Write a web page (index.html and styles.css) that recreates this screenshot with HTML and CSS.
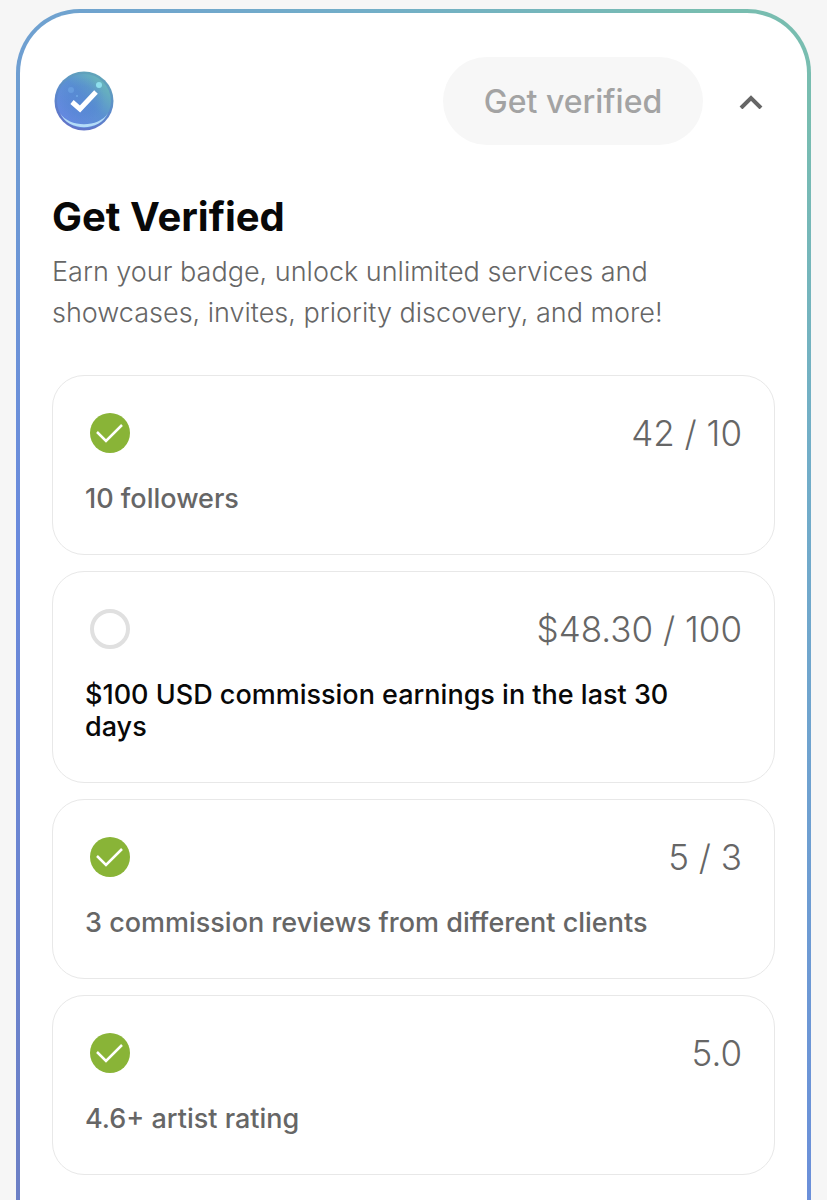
FILE: index.html
```html
<!DOCTYPE html>
<html lang="en">
<head>
    <meta charset="UTF-8">
    <meta name="viewport" content="width=device-width, initial-scale=1.0">
    <title>Get Verified</title>
    <link rel="stylesheet" href="styles.css">
</head>
<body>
    <main class="panel">
        <div class="panel-top">
            <svg class="badge" viewBox="0 0 60 60" aria-hidden="true">
                <defs>
                    <linearGradient id="rim" x1="0.3" y1="1" x2="0.7" y2="0">
                        <stop offset="0" stop-color="#6272c8"/>
                        <stop offset="0.5" stop-color="#5c8acc"/>
                        <stop offset="1" stop-color="#62a6b8"/>
                    </linearGradient>
                    <linearGradient id="disc" x1="0.2" y1="0.9" x2="0.9" y2="0.2">
                        <stop offset="0" stop-color="#6488e0"/>
                        <stop offset="0.55" stop-color="#5a90d2"/>
                        <stop offset="1" stop-color="#68b4bc"/>
                    </linearGradient>
                    <radialGradient id="core">
                        <stop offset="0.6" stop-color="#5080d2" stop-opacity="0.3"/>
                        <stop offset="1" stop-color="#5080d2" stop-opacity="0"/>
                    </radialGradient>
                </defs>
                <circle cx="30" cy="30" r="29.5" fill="url(#rim)"/>
                <circle cx="30" cy="30" r="27" fill="url(#disc)"/>
                <circle cx="28" cy="29" r="23" fill="url(#core)"/>
                <path d="M6 42C14 61 46 61 54 42C45 57 15 57 6 42Z" fill="#b4dcf8"/>
                <circle cx="17" cy="19" r="3" fill="#6fa8e6" opacity="0.6"/>
                <circle cx="23" cy="25" r="1" fill="#6fa8e6"/>
                <circle cx="45" cy="14" r="3" fill="#8fe0ee"/>
                <path d="M18 31L26 38L42 21" fill="none" stroke="#fff" stroke-width="5"/>
            </svg>
            <button class="verify" disabled>Get verified</button>
            <button class="toggle" aria-label="Collapse">
                <svg viewBox="0 0 24 16" aria-hidden="true">
                    <path d="M2 15L12 5L22 15" fill="none" stroke="#666" stroke-width="4"/>
                </svg>
            </button>
        </div>
        <h1>Get Verified</h1>
        <p class="intro">Earn your badge, unlock unlimited services and showcases, invites, priority discovery, and more!</p>
        <ul class="goals">
            <li class="goal">
                <div class="goal-row">
                    <svg class="mark" viewBox="0 0 40 40" aria-label="Done">
                        <circle cx="20" cy="20" r="20" fill="#89b437"/>
                        <path d="M7 19L16 28L32 12" fill="none" stroke="#fff" stroke-width="2.5"/>
                    </svg>
                    <span class="count">42 / 10</span>
                </div>
                <p class="label">10 followers</p>
            </li>
            <li class="goal open">
                <div class="goal-row">
                    <svg class="mark" viewBox="0 0 40 40" aria-label="Not done">
                        <circle cx="20" cy="20" r="18" fill="none" stroke="#e0e0e0" stroke-width="4"/>
                    </svg>
                    <span class="count">$48.30 / 100</span>
                </div>
                <p class="label">$100 USD commission earnings in the last 30 days</p>
            </li>
            <li class="goal">
                <div class="goal-row">
                    <svg class="mark" viewBox="0 0 40 40" aria-label="Done">
                        <circle cx="20" cy="20" r="20" fill="#89b437"/>
                        <path d="M7 19L16 28L32 12" fill="none" stroke="#fff" stroke-width="2.5"/>
                    </svg>
                    <span class="count">5 / 3</span>
                </div>
                <p class="label">3 commission reviews from different clients</p>
            </li>
            <li class="goal">
                <div class="goal-row">
                    <svg class="mark" viewBox="0 0 40 40" aria-label="Done">
                        <circle cx="20" cy="20" r="20" fill="#89b437"/>
                        <path d="M7 19L16 28L32 12" fill="none" stroke="#fff" stroke-width="2.5"/>
                    </svg>
                    <span class="count">5.0</span>
                </div>
                <p class="label">4.6+ artist rating</p>
            </li>
        </ul>
    </main>
</body>
</html>
```
FILE: styles.css
```css
* {
    box-sizing: border-box;
}
body {
    margin: 0;
    padding: 9px 16px 0;
    height: 100vh;
    overflow: hidden;
    background: #f6f6f6;
    font-family: Inter, "Open Sans", sans-serif;
    color: #666;
}
.panel {
    border: 4px solid transparent;
    border-radius: 64px;
    padding: 44px 32px 160px;
    background:
        linear-gradient(#fff, #fff) padding-box,
        linear-gradient(45deg, #6c7cc0, #6c80c6 8%, #6a8adc 38%, #6fa1d0 63%, #72aec8 79%, #78bdb0 95%) border-box;
}
.panel-top {
    display: flex;
    align-items: center;
    height: 88px;
}
.badge {
    width: 60px;
    height: 60px;
    margin-left: 2px;
}
button {
    border: none;
    font-family: inherit;
}
.verify {
    width: 260px;
    height: 88px;
    margin-left: auto;
    border-radius: 44px;
    background: #f7f7f7;
    color: #a3a3a3;
    font-size: 32px;
    font-weight: 500;
}
.toggle {
    display: flex;
    align-items: center;
    justify-content: center;
    width: 48px;
    height: 48px;
    margin-left: 24px;
    padding: 0;
    background: none;
}
.toggle svg {
    width: 24px;
    height: 16px;
}
h1 {
    margin: 48px 0 10px;
    color: #080808;
    font-size: 40px;
    font-weight: 700;
    line-height: 48px;
}
.intro {
    margin: 0 0 42px;
    font-size: 27px;
    font-weight: 300;
    line-height: 41px;
}
.goals {
    display: flex;
    flex-direction: column;
    gap: 16px;
    margin: 0;
    padding: 0;
    list-style: none;
}
.goal {
    padding: 32px 32px 39px;
    border: 1px solid #e8e8e8;
    border-radius: 32px;
}
.goal-row {
    display: flex;
    align-items: center;
    justify-content: space-between;
    height: 50px;
    margin-bottom: 25px;
}
.mark {
    width: 40px;
    height: 40px;
    margin-left: 5px;
}
.count {
    font-size: 35px;
    font-weight: 300;
}
.label {
    margin: 0;
    padding-right: 40px;
    font-size: 27px;
    font-weight: 500;
    line-height: 32px;
}
.open .label {
    color: #080808;
}
```
